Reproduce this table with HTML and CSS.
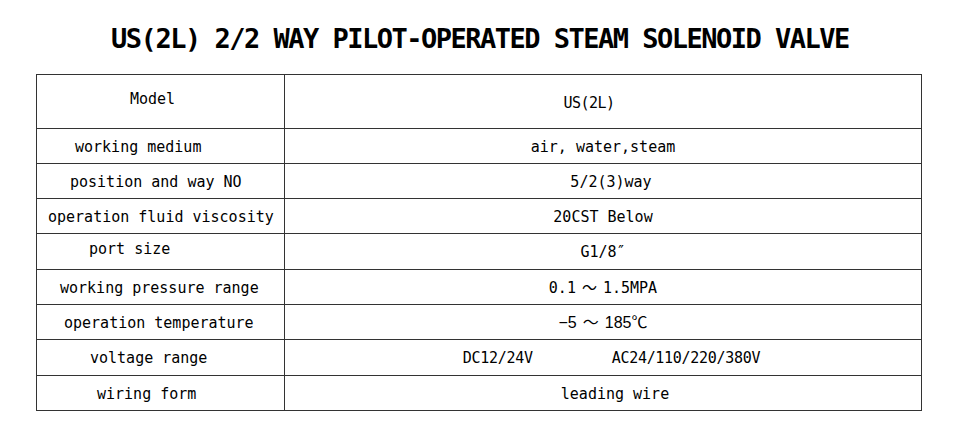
FILE: index.html
```html
<!DOCTYPE html>
<html lang="en">
<head>
<meta charset="utf-8">
<title>US(2L) 2/2 Way Pilot-Operated Steam Solenoid Valve</title>
<link rel="stylesheet" href="styles.css">
</head>
<body>
<h1 class="title">US(2L) 2/2 WAY PILOT-OPERATED STEAM SOLENOID VALVE</h1>
<div class="spec">
  <div class="cell key key-model">Model</div>
  <div class="cell val val-model">US(2L)</div>

  <div class="cell key ind-38">working medium</div>
  <div class="cell val">air, water,steam</div>

  <div class="cell key ind-33">position and way NO</div>
  <div class="cell val shift-r">5/2(3)way</div>

  <div class="cell key ind-11">operation fluid viscosity</div>
  <div class="cell val">20CST Below</div>

  <div class="cell key ind-52 up">port size</div>
  <div class="cell val">G1/8″</div>

  <div class="cell key ind-23">working pressure range</div>
  <div class="cell val"><span>0.1<span class="wave">～</span>1.5MPA</span></div>

  <div class="cell key ind-27">operation temperature</div>
  <div class="cell val val-temp"><span>−5<span class="wave">～</span>185℃</span></div>

  <div class="cell key ind-53">voltage range</div>
  <div class="cell val val-volt"><span>DC12/24V</span><span>AC24/110/220/380V</span></div>

  <div class="cell key ind-60">wiring form</div>
  <div class="cell val shift-r2">leading wire</div>
</div>
</body>
</html>
```

FILE: styles.css
```css
html, body {
  margin: 0;
  padding: 0;
  background: #ffffff;
}

body {
  width: 960px;
  height: 425px;
  overflow: hidden;
  color: #000;
  font-family: "DejaVu Sans Mono", "Liberation Mono", "Noto Sans CJK SC", monospace;
}

.title {
  margin: 23px 0 19px 0;
  height: 32px;
  line-height: 32px;
  font-size: 27px;
  font-weight: bold;
  letter-spacing: -1.5px;
  text-align: center;
  white-space: nowrap;
}

.spec {
  margin-left: 36px;
  width: 885px;
  display: grid;
  grid-template-columns: 248px 637px;
  grid-template-rows: 54px 35px 35px 35px 36px 35px 35px 36px 35px;
  border-top: 1px solid #333;
  border-left: 1px solid #333;
}

.cell {
  border-right: 1px solid #333;
  border-bottom: 1px solid #333;
  display: flex;
  align-items: center;
  font-size: 15px;
  line-height: 18px;
  white-space: nowrap;
  padding-top: 1px;
  box-sizing: border-box;
}

.key {
  justify-content: flex-start;
}

.key-model { padding-left: 93px; padding-top: 0; padding-bottom: 6px; }
.ind-38 { padding-left: 38px; }
.ind-33 { padding-left: 33px; }
.ind-11 { padding-left: 11px; }
.ind-52 { padding-left: 52px; }
.ind-23 { padding-left: 23px; }
.ind-27 { padding-left: 27px; }
.ind-53 { padding-left: 53px; }
.ind-60 { padding-left: 60px; }
.up { padding-top: 0; padding-bottom: 6px; }

.val {
  justify-content: center;
}

.val-model {
  padding-right: 28px;
  padding-top: 2px;
  letter-spacing: -0.5px;
}

.shift-r { padding-left: 16px; }
.shift-r2 { padding-left: 24px; }

.wave {
  display: inline-block;
  margin: 0 6px;
  font-family: "Liberation Sans", "Noto Sans CJK SC", sans-serif;
}

.val-temp {
  font-family: "Liberation Sans", "Noto Sans CJK SC", sans-serif;
  font-size: 16px;
}

.val-volt {
  gap: 79px;
  padding-left: 17px;
  letter-spacing: -0.3px;
}
```
